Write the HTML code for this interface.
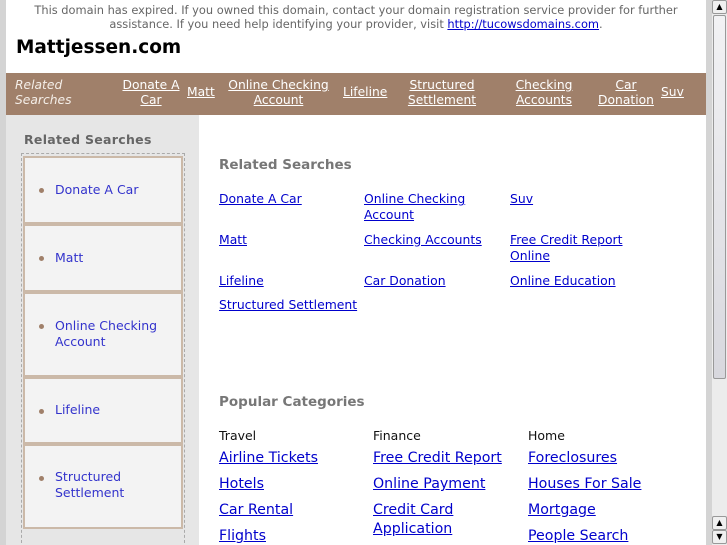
<!DOCTYPE html>
<html style="width:727px;height:545px;overflow:hidden"><head><style>
*{margin:0;padding:0;box-sizing:border-box}
body{width:727px;height:545px;overflow:hidden;background:#d4d4d4;font-family:"DejaVu Sans","Liberation Sans",sans-serif;position:relative}
.page{position:absolute;left:6px;top:0;width:700px;height:545px;background:#fff;overflow:hidden}
.top{position:absolute;left:0;top:3px;width:700px;text-align:center;font-size:11.4px;line-height:14px;color:#666}
.top a{color:#00c}
h1{position:absolute;left:10px;top:37px;font-size:18.5px;font-weight:bold;color:#000}
.nav{position:absolute;left:0;top:73px;width:700px;height:42px;background:#a0806a;font-size:12.3px;line-height:15px}
.nav span,.nav a{position:absolute;text-align:center;color:#fff;white-space:nowrap}
.nav a{text-decoration:underline}
.nav .rs{left:9px;top:5px;font-style:italic;text-align:left;color:#f4eee8}
.side{position:absolute;left:0;top:115px;width:193px;height:430px;background:#e6e6e6}
.side h3{position:absolute;left:18px;top:17px;font-size:12.5px;color:#666;letter-spacing:.3px}
.dash{position:absolute;left:15px;top:38px;width:164px;height:400px;border:1px dashed #aaa}
.item{position:absolute;left:17px;width:160px;background:#f3f3f3;border:2px solid #cbb9a8;font-size:12.5px;line-height:16px;color:#33c}
.item i{position:absolute;left:14px;width:5px;height:5px;border-radius:50%;background:#a0806a}
.item span{position:absolute;left:30px}
.main{position:absolute;left:193px;top:115px}
.main h2{position:absolute;left:20px;font-size:13.5px;color:#777;white-space:nowrap}
.l{position:absolute;font-size:12.4px;line-height:16px;color:#00c;text-decoration:underline;white-space:nowrap}
.c{position:absolute;font-size:12.5px;color:#111}
.p{position:absolute;font-size:14.2px;line-height:19px;color:#00c;text-decoration:underline;white-space:nowrap}
.sb{position:absolute;left:712px;top:0;width:15px;height:545px;background:#ececec}
.btn{position:absolute;left:0;width:15px;height:14px;background:#f0f0f0;border:1px solid #999;border-radius:2px;font-size:8px;text-align:center;line-height:12px}
.thumb{position:absolute;left:1px;top:15px;width:13px;height:364px;background:linear-gradient(#f2f2f4,#d8d8de);border:1px solid #999;border-radius:2px}
</style></head><body>
<div class="page">
<div class="top">This domain has expired. If you owned this domain, contact your domain registration service provider for further<br>assistance. If you need help identifying your provider, visit <a href="#">http://tucowsdomains.com</a>.</div>
<h1>Mattjessen.com</h1>
<div class="nav">
<span class="rs">Related<br>Searches</span>
<a style="left:112px;top:5px;width:66px">Donate A<br>Car</a>
<a style="left:181px;top:12px">Matt</a>
<a style="left:220px;top:5px;width:105px">Online Checking<br>Account</a>
<a style="left:337px;top:12px">Lifeline</a>
<a style="left:400px;top:5px;width:72px">Structured<br>Settlement</a>
<a style="left:506px;top:5px;width:64px">Checking<br>Accounts</a>
<a style="left:590px;top:5px;width:60px">Car<br>Donation</a>
<a style="left:655px;top:12px">Suv</a>
</div>
<div class="side">
<h3>Related Searches</h3>
<div class="dash"></div>
<div class="item" style="top:41px;height:68px"><i style="top:30px"></i><span style="top:24px">Donate A Car</span></div>
<div class="item" style="top:109px;height:68px"><i style="top:30px"></i><span style="top:24px">Matt</span></div>
<div class="item" style="top:177px;height:85px"><i style="top:30px"></i><span style="top:24px">Online Checking<br>Account</span></div>
<div class="item" style="top:262px;height:67px"><i style="top:30px"></i><span style="top:23px">Lifeline</span></div>
<div class="item" style="top:329px;height:85px"><i style="top:30px"></i><span style="top:23px">Structured<br>Settlement</span></div>
</div>
<div class="main">
<h2 style="top:42px">Related Searches</h2>
<a class="l" style="left:20px;top:76px">Donate A Car</a>
<a class="l" style="left:165px;top:76px">Online Checking<br>Account</a>
<a class="l" style="left:311px;top:76px">Suv</a>
<a class="l" style="left:20px;top:117px">Matt</a>
<a class="l" style="left:165px;top:117px">Checking Accounts</a>
<a class="l" style="left:311px;top:117px">Free Credit Report<br>Online</a>
<a class="l" style="left:20px;top:158px">Lifeline</a>
<a class="l" style="left:165px;top:158px">Car Donation</a>
<a class="l" style="left:311px;top:158px">Online Education</a>
<a class="l" style="left:20px;top:182px">Structured Settlement</a>
<h2 style="top:279px">Popular Categories</h2>
<div class="c" style="left:20px;top:313px">Travel</div>
<div class="c" style="left:174px;top:313px">Finance</div>
<div class="c" style="left:329px;top:313px">Home</div>
<a class="p" style="left:20px;top:334px">Airline Tickets</a>
<a class="p" style="left:20px;top:360px">Hotels</a>
<a class="p" style="left:20px;top:386px">Car Rental</a>
<a class="p" style="left:20px;top:412px">Flights</a>
<a class="p" style="left:174px;top:334px">Free Credit Report</a>
<a class="p" style="left:174px;top:360px">Online Payment</a>
<a class="p" style="left:174px;top:386px">Credit Card<br>Application</a>
<a class="p" style="left:329px;top:334px">Foreclosures</a>
<a class="p" style="left:329px;top:360px">Houses For Sale</a>
<a class="p" style="left:329px;top:386px">Mortgage</a>
<a class="p" style="left:329px;top:412px">People Search</a>
</div>
</div>
<div class="sb">
<div class="btn" style="top:0">▲</div>
<div class="thumb"></div>
<div class="btn" style="top:516px">▲</div>
<div class="btn" style="top:530px">▼</div>
</div>
</body></html>
